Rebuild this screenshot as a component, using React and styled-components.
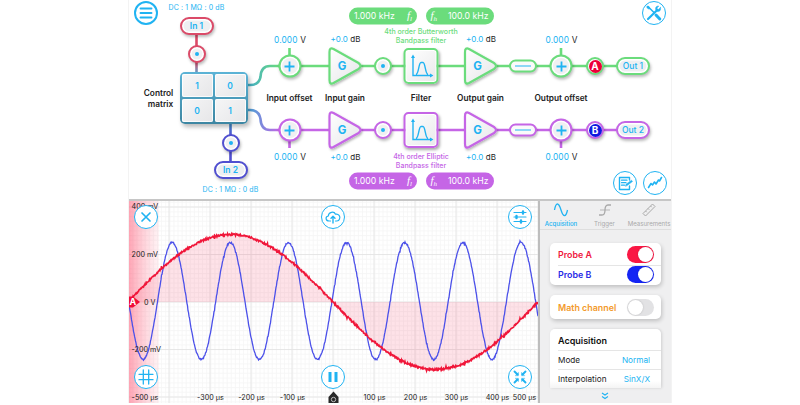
import React from "react";
import styled, { createGlobalStyle } from "styled-components";

const CYAN = "#20b3f2";
const GREEN = "#6bdc7c";
const PURPLE = "#c565e6";

const GlobalStyle = createGlobalStyle`
  * { box-sizing: border-box; }
  body { margin: 0; background: #fff; font-family: Inter, "Liberation Sans", sans-serif; }
`;

const Frame = styled.main`
  width: 544px;
  height: 403px;
  margin-left: 128px;
  border: solid #f3f3f3;
  border-width: 0 1px;
  display: grid;
  grid-template-rows: 199px 204px;
  background: #fff;
  overflow: hidden;
`;

const Diagram = styled.section`
  position: relative;
  margin-left: -129px;
  width: 671px;
  height: 199px;
`;

const Wires = styled.svg`
  position: absolute;
  left: 0;
  top: 0;
  overflow: visible;
`;

/* Every item of the signal path is centred on its own canvas point. */
const Node = styled.div`
  position: absolute;
  left: ${(p) => p.$x}px;
  top: ${(p) => p.$y}px;
  transform: translate(-50%, -50%);
  display: flex;
  align-items: center;
  justify-content: center;
  white-space: nowrap;
`;

const Label = styled(Node)`
  font-size: ${(p) => p.$size || 8.3}px;
  font-weight: ${(p) => p.$weight || 400};
  letter-spacing: ${(p) => p.$spacing || 0}px;
  color: ${(p) => p.$color || "#222"};
  line-height: 1;
`;

const Value = styled.span`
  color: ${CYAN};
  margin-right: 2.5px;
`;

const Pill = styled(Node)`
  width: 34px;
  height: 18px;
  border: 2px solid ${(p) => p.$color};
  border-radius: 9px;
  background: #eeeff1;
  box-shadow: inset 0 0 0 1.5px #fff, 1px 2px 3px #0004;
  color: ${CYAN};
  font-size: 8.5px;
  font-weight: ${(p) => p.$weight || 600};
`;

const Round = styled(Node)`
  width: ${(p) => p.$size}px;
  height: ${(p) => p.$size}px;
  border: 2px solid ${(p) => p.$color};
  border-radius: 50%;
  background: #f0f0f2;
  box-shadow: inset 0 0 0 1.5px #fff, 1px 2px 3px #0004;
`;

const Dot = styled.i`
  width: 4px;
  height: 4px;
  border-radius: 50%;
  background: ${CYAN};
`;

const ProbeDisc = styled.b`
  width: 13px;
  height: 13px;
  flex: none;
  border-radius: 50%;
  background: ${(p) => p.$color};
  color: #fff;
  font-size: 10px;
  line-height: 13px;
  text-align: center;
`;

const Block = styled(Node)`
  width: 35px;
  height: 36px;
  border: 2px solid ${(p) => p.$color};
  border-radius: 5px;
  background: linear-gradient(135deg, #fff, #e9e9eb);
  box-shadow: inset 0 0 0 1px #fff, 1px 2px 3px #0005;
`;

const Link = styled(Node)`
  width: 28px;
  height: 13px;
  border: 2px solid ${(p) => p.$color};
  border-radius: 7px;
  background: #fafafa;
  box-shadow: 1px 2px 2px #0003;

  &::after {
    content: "";
    width: 16px;
    height: 1.5px;
    background: ${CYAN};
  }
`;

const Matrix = styled(Node)`
  display: grid;
  grid-template-columns: 1fr 1fr;
  gap: 2px;
  width: 68px;
  height: 52px;
  padding: 2px;
  border-radius: 5px;
  background: linear-gradient(#5bb3d6, #3d86a2);
  box-shadow: 2px 3px 4px #0004;
`;

const Cell = styled.div`
  display: flex;
  height: 23px;
  align-items: center;
  justify-content: center;
  border-radius: 2px;
  background: linear-gradient(135deg, #f6f6f7, #e6e6e8);
  box-shadow: inset 0 0 0 1px #fffc;
  color: ${CYAN};
  font-size: 8.5px;
  font-weight: 600;
`;

const Frequency = styled(Node)`
  width: 68px;
  height: 17px;
  padding: 0 5px 0 5px;
  justify-content: space-between;
  border-radius: 9px;
  background: ${(p) => p.$color};
  color: #fff;
  font-size: 8.7px;

  em {
    font: italic 11px "Liberation Serif", serif;
  }
  sub {
    font-size: 7px;
    vertical-align: -2px;
  }
`;

const RoundButton = styled.button`
  width: 24px;
  height: 24px;
  padding: 0;
  border: 1.5px solid ${CYAN};
  border-width: ${(p) => (p.$heavy ? 2 : 1.5)}px;
  border-radius: 50%;
  background: #fff;
  color: ${CYAN};
  display: grid;
  place-items: center;

  svg {
    display: block;
    fill: none;
    stroke: currentColor;
    stroke-linecap: round;
    stroke-linejoin: round;
  }
`;

const Lower = styled.section`
  display: grid;
  grid-template-columns: 409px 133px;
  border-top: 2px solid #c6c6c6;
`;

const Scope = styled.div`
  position: relative;
  height: 202px;
  overflow: hidden;
`;

const ScopeOverlay = styled.div`
  position: absolute;
  inset: 4px 6px 14px 5px;
  display: grid;
  grid-template-columns: repeat(3, 24px);
  justify-content: space-between;
  align-content: space-between;
`;

const Side = styled.aside`
  height: 202px;
  border-left: 2px solid #bdbdbd;
  background: #efeff0;
  overflow: hidden;
`;

const Tabs = styled.nav`
  display: grid;
  grid-template-columns: 42px 45px 44px;
  height: 29px;
  border-bottom: 1px solid #dedede;
`;

const Tab = styled.div`
  display: flex;
  flex-direction: column;
  align-items: center;
  padding-top: 1.5px;
  gap: 3px;
  color: ${(p) => (p.$active ? CYAN : "#a9a9a9")};
  font-size: 6.1px;
  font-weight: ${(p) => (p.$active ? 500 : 400)};
  line-height: 8px;
  white-space: nowrap;

  svg { fill: none; stroke: currentColor; }
`;

const Cards = styled.div`
  display: grid;
  gap: 10px;
  padding: 13px 10px 0 10px;
`;

const Card = styled.div`
  padding: 0 7px 0 8px;
  border-radius: 5px;
  background: #fff;
  box-shadow: 1px 2px 4px #0003;
  height: ${(p) => p.$height}px;
  overflow: hidden;
`;

const ClippedCard = styled(Card)`
  border-radius: 5px 5px 0 0;
  padding-top: 2px;
  background: linear-gradient(#fff 88%, #f4f4f4);
  box-shadow: 1px 0 3px #0002;
`;

const Row = styled.div`
  display: flex;
  align-items: center;
  justify-content: space-between;
  height: ${(p) => p.$height || 19}px;
  margin-right: -7px;
  padding-right: ${(p) => p.$inset || 7.5}px;
  color: ${(p) => p.$color || "#222"};
  font-size: ${(p) => p.$size || 8.2}px;
  font-weight: ${(p) => p.$weight || 400};
  border-top: ${(p) => (p.$line ? "1px solid #e5e5e5" : "0")};
`;

const RowValue = styled.span`
  color: ${CYAN};
`;

const Toggle = styled.span`
  display: flex;
  justify-content: ${(p) => (p.$color ? "flex-end" : "flex-start")};
  width: 27px;
  height: 17px;
  padding: 1px;
  border-radius: 9px;
  background: ${(p) => p.$color || "#e2e2e4"};

  &::after {
    content: "";
    width: 15px;
    height: 15px;
    border-radius: 50%;
    background: #fff;
    box-shadow: 0 0 2px #0003;
  }
`;

const More = styled.div`
  display: flex;
  justify-content: center;
  padding: 4px 2px 0 0;
`;

const ICONS = {
  menu: <path d="M3.500 4.500h11M3.500 9h11M3.500 13.500h11" strokeWidth="1.900" />,
  close: <path d="M5 5l8 8M13 5l-8 8" strokeWidth="1.7" />,
  pause: <path d="M6 4v10M12 4v10" strokeWidth="3" strokeLinecap="butt" />,
  grid: <path d="M6.3 2v14M11.7 2v14M2 6.3h14M2 11.7h14" strokeWidth="1.3" />,
  cloud: (
    <>
      <path d="M6.5 13H5C1.5 13 1 8.500 4.300 8C4.500 4 10 2.800 11.500 6.200C14.500 5.500 16.800 8.500 15.500 11Q14.800 13 13 13h-1.500" strokeWidth="1.2" />
      <path d="M9 15V8.500M7 10.300l2-2 2 2" strokeWidth="1.4" />
    </>
  ),
  sliders: (
    <>
      <path d="M3 4.500h12M3 9h12M3 13.500h12" strokeWidth="1.2" />
      <path d="M12 3.500v2M5.500 8v2M10 12.500v2" strokeWidth="2.400" />
    </>
  ),
  expand: (
    <>
      <path d="M3.500 3.500l3 3M14.500 3.500l-3 3M3.500 14.500l3-3M14.500 14.500l-3-3" strokeWidth="1.900" />
      <path d="M7.500 7.500V4.300L4.300 7.500zM10.500 7.500V4.300L13.700 7.500zM7.500 10.500V13.700L4.300 10.500zM10.500 10.500V13.700L13.700 10.500z" fill="currentColor" strokeWidth=".3" />
    </>
  ),
  tools: (
    <>
      <path d="M3 2.500l6 6" strokeWidth="1.500" />
      <path d="M11 11l3.800 4" strokeWidth="3" />
      <path d="M3 15l9-8.800" strokeWidth="2.200" />
      <path d="M15.500 3.500l-2.200 2-1.500-1.300L13.800 2C11 1.500 10 4 10.800 6l1.500 1.500c2 .6 4-1.200 3.200-4z" fill="currentColor" strokeWidth=".5" />
      <path d="M2 2l2 .5 1 2-1 .8-2-1.300z" fill="currentColor" strokeWidth=".4" />
    </>
  ),
  notes: (
    <>
      <path d="M13.500 6V3.500h-10v12h10V12" strokeWidth="1.400" />
      <path d="M5.500 6.200h5.500M5.500 8.700h4.500M5.500 11.200h3" strokeWidth="1.200" />
      <path d="M9.500 12l.5-1.800 5.500-4 1 1.300-5.400 4.100z" fill="currentColor" strokeWidth=".5" />
    </>
  ),
  trend: <path d="M2.500 13.500l2.500-4 1.500 1.500 2-3 1.500 2 2.500-4 1 1 2-3.500" strokeWidth="1.600" />,
};

function Icon({ name }) {
  return <svg width="18" height="18" viewBox="0 0 18 18">{ICONS[name]}</svg>;
}

function IconButton({ name, heavy }) {
  return <RoundButton aria-label={name} $heavy={heavy}><Icon name={name} /></RoundButton>;
}

function Plus() {
  return (
    <svg width="12" height="12" viewBox="0 0 12 12">
      <path d="M6 1v10M1 6h10" stroke={CYAN} strokeWidth="1.8" />
    </svg>
  );
}

function Amplifier({ x, y, color }) {
  return (
    <g>
      <path
        d={`M${x} ${y - 14}Q${x} ${y - 19} ${x + 4} ${y - 17}L${x + 29} ${y - 3}Q${x + 33} ${y} ${x + 29} ${y + 3}L${x + 4} ${y + 17}Q${x} ${y + 19} ${x} ${y + 14}Z`}
        fill="url(#face)" stroke={color} strokeWidth="2.2" filter="url(#drop)"
      />
      <text x={x + 12.5} y={y + 4} textAnchor="middle" fontSize="11.5" fontWeight="700" fill={CYAN}>G</text>
    </g>
  );
}

function Channel({ y, color, side, probe, probeColor, output, family }) {
  const out = side === "top" ? -1 : 1;
  const freqY = side === "top" ? 15.5 : 180.5;
  const valueY = side === "top" ? 39.500 : 156.5;
  const lines = side === "top" ? [31.5, 39.5] : [156.5, 164.5];
  return (
    <>
      {[289.5, 561].map((x) => (
        <React.Fragment key={x}>
          <Round $x={x} $y={y} $size={23} $color={color}><Plus /></Round>
          <Label $x={x + 0.5} $y={valueY} $size={8.3} $spacing={0.15}><Value>0.000</Value>V</Label>
        </React.Fragment>
      ))}
      {[345.5, 481].map((x) => (
        <Label key={x} $x={x} $y={y + out * 27.2} $size={8}><Value>+0.0</Value>dB</Label>
      ))}
      <Round $x={383} $y={y} $size={18} $color={color}><Dot /></Round>
      <Block $x={421.3} $y={y} $color={color}>
        <svg width="24" height="24" viewBox="0 0 24 24" fill="none" stroke={CYAN}>
          <path d="M3.500 3v18.500H22M6.500 20.500C9.500 20 9 8.500 11.500 8.500H13.500C16 8.500 15.500 20 18.500 20.500" strokeWidth="1.400" />
          <path d="M3.500 0.500l-2 3.500h4zM24 21.500l-3.500-2v4z" fill={CYAN} stroke="none" />
        </svg>
      </Block>
      <Link $x={523} $y={y} $color={color} />
      <Round $x={595} $y={y} $size={18} $color={color}>
        <ProbeDisc $color={probeColor}>{probe}</ProbeDisc>
      </Round>
      <Pill $x={633} $y={y} $color={color} $weight={500}>{output}</Pill>
      <Frequency $x={383} $y={freqY} $color={color}>
        <span>1.000 kHz</span><em>f<sub>l</sub></em>
      </Frequency>
      <Frequency $x={459.500} $y={freqY} $color={color}>
        <em>f<sub>h</sub></em><span>100.0 kHz</span>
      </Frequency>
      <Label $x={421} $y={lines[0]} $size={7.1} $weight={500} $color={color}>4th order {family}</Label>
      <Label $x={421} $y={lines[1]} $size={7} $weight={500} $color={color}>Bandpass filter</Label>
    </>
  );
}

function SignalPath() {
  return (
    <Diagram>
      <Wires width="671" height="199" fill="none">
        <defs>
          <linearGradient id="face" x2="1" y2="1"><stop stopColor="#fff" /><stop offset="1" stopColor="#e5e5e8" /></linearGradient>
          <filter id="drop" x="-30%" y="-30%" width="170%" height="170%">
            <feDropShadow dx="1" dy="1.5" stdDeviation="1.3" floodOpacity=".3" />
          </filter>
          <linearGradient id="toGreen"><stop stopColor="#43adc9" /><stop offset="1" stopColor={GREEN} /></linearGradient>
          <linearGradient id="toPurple"><stop stopColor="#43a5d4" /><stop offset="1" stopColor={PURPLE} /></linearGradient>
          <linearGradient id="inA" gradientUnits="userSpaceOnUse" x1="0" x2="0" y1="62" y2="74"><stop stopColor="#db4a68" /><stop offset="1" stopColor="#55a9d3" /></linearGradient>
          <linearGradient id="inB" gradientUnits="userSpaceOnUse" x1="0" x2="0" y1="122" y2="135"><stop stopColor="#409ecb" /><stop offset="1" stopColor="#504fd0" /></linearGradient>
        </defs>
        <g strokeWidth="2.600">
          <path d="M196.500 33v20" stroke="#db4a68" />
          <path d="M196.500 61v13" stroke="url(#inA)" />
          <path d="M230.500 122v14" stroke="url(#inB)" />
          <path d="M230.500 148v14" stroke="#504fd0" />
          <path d="M247 85H250Q259 85 260.500 77Q261 66 270 66H280" stroke="url(#toGreen)" />
          <path d="M247 110H250Q259 110 260.500 119Q261 130 270 130H280" stroke="url(#toPurple)" />
          <path d="M278 66H620M289.500 48v10M561 48v10" stroke={GREEN} />
          <path d="M278 130H620M289.500 138v10M561 138v10" stroke={PURPLE} />
        </g>
        <Amplifier x={329.5} y={66} color={GREEN} />
        <Amplifier x={465} y={66} color={GREEN} />
        <Amplifier x={329.5} y={130} color={PURPLE} />
        <Amplifier x={465} y={130} color={PURPLE} />
      </Wires>
      <Node $x={146} $y={13}><IconButton name="menu" heavy /></Node>
      <Node $x={654} $y={13}><IconButton name="tools" /></Node>
      <Node $x={624.5} $y={182.5}><IconButton name="notes" /></Node>
      <Node $x={654.5} $y={182.5}><IconButton name="trend" /></Node>
      <Label $x={196.500} $y={6.500} $size={7} $spacing={0.12} $color={CYAN}>DC : 1 MΩ : 0 dB</Label>
      <Label $x={230.500} $y={189} $size={7} $spacing={0.12} $color={CYAN}>DC : 1 MΩ : 0 dB</Label>
      <Pill $x={196.500} $y={25.500} $color="#db4a68">In 1</Pill>
      <Pill $x={230.500} $y={170} $color="#504fd0">In 2</Pill>
      <Round $x={196.500} $y={53.500} $size={18} $color="#db4a68"><Dot /></Round>
      <Round $x={230.500} $y={142.500} $size={18} $color="#504fd0"><Dot /></Round>
      <Matrix $x={213.500} $y={98}>
        <Cell>1</Cell><Cell>0</Cell><Cell>0</Cell><Cell>1</Cell>
      </Matrix>
      <Label $x={158.500} $y={93} $weight={600}>Control</Label>
      <Label $x={160.500} $y={103.500} $weight={600}>matrix</Label>
      <Label $x={289.500} $y={98} $weight={600}>Input offset</Label>
      <Label $x={345} $y={98} $weight={600}>Input gain</Label>
      <Label $x={421} $y={98} $weight={600}>Filter</Label>
      <Label $x={480.500} $y={98} $weight={600}>Output gain</Label>
      <Label $x={561} $y={98} $weight={600}>Output offset</Label>
      <Channel y={66} color={GREEN} side="top" probe="A" probeColor="#ed0038" output="Out 1" family="Butterworth" />
      <Channel y={130} color={PURPLE} side="bottom" probe="B" probeColor="#1119df" output="Out 2" family="Elliptic" />
    </Diagram>
  );
}

/* Sampled sine with repeatable measurement noise. */
function trace(center, amplitude, period, start, noise) {
  const points = [];
  for (let i = 0; i <= 818; i += 1) {
    const x = i / 2;
    const random = Math.sin(i * 127.1 + 31.7) * 43758.5453;
    const r = random - Math.floor(random) - 0.5;
    const spike = i % 37 === 5 || i % 53 === 12 ? 2.8 : 1;
    const y = center - amplitude * Math.sin((2 * Math.PI * (x - start)) / period) + r * noise * spike;
    points.push(`${x} ${y.toFixed(2)}`);
  }
  return `M${points.join("L")}`;
}

const redTrace = trace(101, 67.5, 410, -1, 1.9);
const blueTrace = trace(100, 58.5, 58.15, 28.6, 1.6);
const range = (n) => Array.from({ length: n }, (_, i) => i);

const VOLT_LABELS = [["400 mV", 5.5], ["200 mV", 53.5], ["0 V", 101], ["-200 mV", 148.5]];
const TIME_LABELS = [["-500 µs", 16], ["-300 µs", 81.5], ["-200 µs", 122.5], ["-100 µs", 163.500], ["100 µs", 245.500], ["200 µs", 286.500], ["300 µs", 327.5], ["400 µs", 368.500], ["500 µs", 395.5]];

function Oscilloscope() {
  return (
    <Scope>
      <svg width="409" height="202" viewBox="0 0 409 202" fill="none">
        <defs>
          <linearGradient id="edge"><stop stopColor="#ff4b6b" stopOpacity=".5" /><stop offset="1" stopColor="#ff8ba0" stopOpacity=".1" /></linearGradient>
        </defs>
        <path d={range(101).map((i) => `M${i * 4.1 - 0.2} 0V202`).join("") + range(43).map((i) => `M0 ${(i * 4.75 + 1.3).toFixed(2)}H409`).join("")} stroke="#f5f5f5" strokeWidth=".8" />
        <path d={range(11).map((i) => `M${i * 41 - 1} 0V202`).join("") + "M0 6H409M0 53.500H409M0 101H409M0 148.500H409M0 196H409"} stroke="#e4e4e4" strokeWidth=".9" />
        <path d={`${redTrace}V101H0Z`} fill="#fa355c" fillOpacity=".14" />
        <path d="M0 0H30V202H0Z" fill="url(#edge)" />
        <path d={blueTrace} stroke="#4b50e9" strokeWidth="1.300" />
        <path d={redTrace} stroke="#f01639" strokeWidth="1.600" />
        <path d="M0 95.500H4L11 101 4 106.500H0Z" fill="#f00c38" />
        <text x="0.500" y="104.300" fontSize="9" fontWeight="700" fill="#fff">A</text>
        <g fontSize="7.200" fill="#202020">
          {VOLT_LABELS.map(([text, y]) => <text key={text} x={text === "0 V" ? 15 : 2.500} y={y + 2.500}>{text}</text>)}
          {TIME_LABELS.map(([text, x]) => <text key={text} x={x} y="199.300" textAnchor="middle">{text}</text>)}
        </g>
        <path d="M199.500 202V196L204.500 190.500 209.500 196V202Z" fill="#292929" />
        <circle cx="204.500" cy="198.500" r="2.200" stroke="#bbb" />
      </svg>
      <ScopeOverlay>
        {["close", "cloud", "sliders", "grid", "pause", "expand"].map((name) => <IconButton key={name} name={name} />)}
      </ScopeOverlay>
    </Scope>
  );
}

function Settings() {
  return (
    <Side>
      <Tabs>
        <Tab $active>
          <svg width="16" height="14" viewBox="0 0 16 14"><path d="M1.500 7C3-1 5.500-1 8 7s5 7 6.500 0" strokeWidth="1.300" /></svg>
          Acquisition
        </Tab>
        <Tab>
          <svg width="16" height="14" viewBox="0 0 16 14"><path d="M2 12H5Q8 12 8 7t3-5h3" strokeWidth="1.300" /><path d="M3 7h10" strokeWidth=".8" /></svg>
          Trigger
        </Tab>
        <Tab>
          <svg width="16" height="14" viewBox="0 0 16 14"><path d="M2 10.500L11.500 1l2.500 2.500L4.500 13zM4.500 8l1.200 1.200M7 5.500l1.200 1.200M9.500 3l1.200 1.200" /></svg>
          Measurements
        </Tab>
      </Tabs>
      <Cards>
        <Card $height={42}>
          <Row $height={22} $color="#ef1740" $weight={600} $size={8.9}>Probe A<Toggle $color="#fa1744" /></Row>
          <Row $height={18} $line $color="#292be6" $weight={600} $size={8.9}>Probe B<Toggle $color="#1525f4" /></Row>
        </Card>
        <Card $height={24}>
          <Row $height={24} $color="#f39a2c" $weight={600} $size={8.9}>Math channel<Toggle /></Row>
        </Card>
        <ClippedCard $height={59}>
          <Row $weight={600} $size={9} $color="#111">Acquisition</Row>
          <Row $line $inset={11}>Mode<RowValue>Normal</RowValue></Row>
          <Row $line $inset={11}>Interpolation<RowValue>SinX/X</RowValue></Row>
        </ClippedCard>
      </Cards>
      <More>
        <svg width="8" height="8" viewBox="0 0 8 8" fill="none" stroke={CYAN} strokeWidth="1.100"><path d="M1 1l3 2 3-2M1 4.500l3 2 3-2" /></svg>
      </More>
    </Side>
  );
}

export default function App() {
  return (
    <>
      <GlobalStyle />
      <Frame>
        <SignalPath />
        <Lower>
          <Oscilloscope />
          <Settings />
        </Lower>
      </Frame>
    </>
  );
}
